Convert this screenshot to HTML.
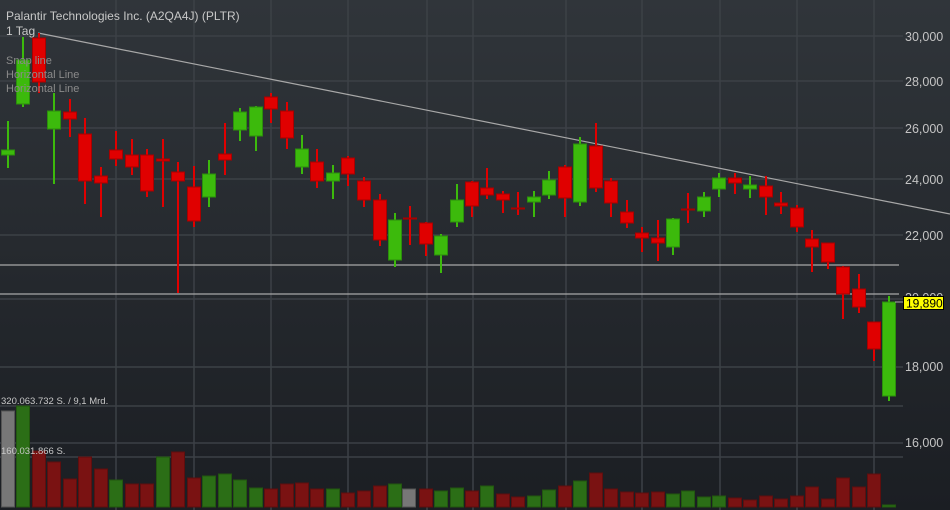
<!DOCTYPE html>
<html><head><meta charset="utf-8"><style>
html,body{margin:0;padding:0;width:950px;height:510px;overflow:hidden;background:#1c1f24}
svg{display:block}
text{font-family:"Liberation Sans",sans-serif}
.g line{stroke:#3cba0c;stroke-width:2}
.g rect{fill:#3cba0c;stroke:#2b8f0c;stroke-width:1}
.r line{stroke:#e00000;stroke-width:2}
.r rect{fill:#e00000;stroke:#a80000;stroke-width:1}
.vr rect{fill:#7a1212;stroke:#5e0e0e}
.vg rect{fill:#2b6e16;stroke:#22570f}
.vy rect{fill:#777;stroke:#555}
</style></head><body>
<svg width="950" height="510" xmlns="http://www.w3.org/2000/svg">
<defs><linearGradient id="bg" x1="0" y1="0" x2="0" y2="1"><stop offset="0" stop-color="#30353a"/><stop offset="1" stop-color="#1b1e23"/></linearGradient></defs>
<rect width="950" height="510" fill="url(#bg)"/>
<g stroke="#3c4146" stroke-width="1.5">
<line x1="0" y1="36" x2="903" y2="36"/><line x1="0" y1="81" x2="903" y2="81"/><line x1="0" y1="128" x2="903" y2="128"/><line x1="0" y1="179" x2="903" y2="179"/><line x1="0" y1="235" x2="903" y2="235"/><line x1="0" y1="299" x2="903" y2="299"/><line x1="0" y1="367" x2="903" y2="367"/><line x1="0" y1="406" x2="903" y2="406"/><line x1="0" y1="443" x2="903" y2="443"/><line x1="0" y1="457" x2="903" y2="457"/>
<line x1="116" y1="0" x2="116" y2="510"/><line x1="194" y1="0" x2="194" y2="510"/><line x1="271" y1="0" x2="271" y2="510"/><line x1="348" y1="0" x2="348" y2="510"/><line x1="427" y1="0" x2="427" y2="510"/><line x1="473" y1="0" x2="473" y2="510"/><line x1="566" y1="0" x2="566" y2="510"/><line x1="642" y1="0" x2="642" y2="510"/><line x1="720" y1="0" x2="720" y2="510"/><line x1="797" y1="0" x2="797" y2="510"/><line x1="874" y1="0" x2="874" y2="510"/>
</g>
<!-- volume -->
<g class="vy"><rect x="1.5" y="411" width="13" height="96"/><rect x="402.5" y="489" width="13" height="18"/></g>
<g class="vg">
<rect x="16.5" y="406" width="13" height="101"/><rect x="109.5" y="480" width="13" height="27"/><rect x="156.5" y="457" width="13" height="50"/><rect x="202.5" y="476" width="13" height="31"/><rect x="218.5" y="474" width="13" height="33"/><rect x="233.5" y="480" width="13" height="27"/><rect x="249.5" y="488" width="13" height="19"/><rect x="326.5" y="489" width="13" height="18"/><rect x="388.5" y="484" width="13" height="23"/><rect x="434.5" y="491" width="13" height="16"/><rect x="450.5" y="488" width="13" height="19"/><rect x="480.5" y="486" width="13" height="21"/><rect x="527.5" y="496" width="13" height="11"/><rect x="542.5" y="490" width="13" height="17"/><rect x="573.5" y="481" width="13" height="26"/><rect x="666.5" y="494" width="13" height="13"/><rect x="681.5" y="491" width="13" height="16"/><rect x="697.5" y="497" width="13" height="10"/><rect x="712.5" y="496" width="13" height="11"/><rect x="882.5" y="505" width="13" height="2"/>
</g>
<g class="vr">
<rect x="32.5" y="451" width="13" height="56"/><rect x="47.5" y="462" width="13" height="45"/><rect x="63.5" y="479" width="13" height="28"/><rect x="78.5" y="457" width="13" height="50"/><rect x="94.5" y="469" width="13" height="38"/><rect x="125.5" y="484" width="13" height="23"/><rect x="140.5" y="484" width="13" height="23"/><rect x="171.5" y="452" width="13" height="55"/><rect x="187.5" y="478" width="13" height="29"/><rect x="264.5" y="489" width="13" height="18"/><rect x="280.5" y="484" width="13" height="23"/><rect x="295.5" y="483" width="13" height="24"/><rect x="310.5" y="489" width="13" height="18"/><rect x="341.5" y="493" width="13" height="14"/><rect x="357.5" y="491" width="13" height="16"/><rect x="373.5" y="486" width="13" height="21"/><rect x="419.5" y="489" width="13" height="18"/><rect x="465.5" y="491" width="13" height="16"/><rect x="496.5" y="494" width="13" height="13"/><rect x="511.5" y="497" width="13" height="10"/><rect x="558.5" y="486" width="13" height="21"/><rect x="589.5" y="473" width="13" height="34"/><rect x="604.5" y="489" width="13" height="18"/><rect x="620.5" y="492" width="13" height="15"/><rect x="635.5" y="493" width="13" height="14"/><rect x="651.5" y="492" width="13" height="15"/><rect x="728.5" y="498" width="13" height="9"/><rect x="743.5" y="500" width="13" height="7"/><rect x="759.5" y="496" width="13" height="11"/><rect x="774.5" y="499" width="13" height="8"/><rect x="790.5" y="496" width="13" height="11"/><rect x="805.5" y="487" width="13" height="20"/><rect x="821.5" y="499" width="13" height="8"/><rect x="836.5" y="478" width="13" height="29"/><rect x="852.5" y="487" width="13" height="20"/><rect x="867.5" y="474" width="13" height="33"/>
</g>
<!-- drawn lines -->
<g stroke="#a8a8a8" stroke-width="1.2">
<line x1="0" y1="265" x2="899" y2="265"/><line x1="0" y1="294" x2="899" y2="294"/>
<line x1="38" y1="33" x2="950" y2="214"/>
</g>
<!-- candles green -->
<g class="g">
<line x1="8" y1="121" x2="8" y2="168"/><rect x="1.5" y="150" width="13" height="5"/>
<line x1="23" y1="37" x2="23" y2="107"/><rect x="16.5" y="60" width="13" height="44"/>
<line x1="54" y1="93" x2="54" y2="184"/><rect x="47.5" y="111" width="13" height="18"/>
<line x1="209" y1="160" x2="209" y2="207"/><rect x="202.5" y="174" width="13" height="23"/>
<line x1="240" y1="108" x2="240" y2="141"/><rect x="233.5" y="112" width="13" height="18"/>
<line x1="256" y1="106" x2="256" y2="151"/><rect x="249.5" y="107" width="13" height="29"/>
<line x1="302" y1="135" x2="302" y2="174"/><rect x="295.5" y="149" width="13" height="18"/>
<line x1="333" y1="165" x2="333" y2="199"/><rect x="326.5" y="173" width="13" height="8"/>
<line x1="395" y1="213" x2="395" y2="267"/><rect x="388.5" y="220" width="13" height="40"/>
<line x1="441" y1="234" x2="441" y2="273"/><rect x="434.5" y="236" width="13" height="19"/>
<line x1="457" y1="184" x2="457" y2="227"/><rect x="450.5" y="200" width="13" height="22"/>
<line x1="534" y1="191" x2="534" y2="217"/><rect x="527.5" y="197" width="13" height="5"/>
<line x1="549" y1="171" x2="549" y2="199"/><rect x="542.5" y="180" width="13" height="15"/>
<line x1="580" y1="137" x2="580" y2="206"/><rect x="573.5" y="144" width="13" height="58"/>
<line x1="673" y1="218" x2="673" y2="255"/><rect x="666.5" y="219" width="13" height="28"/>
<line x1="704" y1="192" x2="704" y2="217"/><rect x="697.5" y="197" width="13" height="14"/>
<line x1="719" y1="173" x2="719" y2="197"/><rect x="712.5" y="178" width="13" height="11"/>
<line x1="750" y1="176" x2="750" y2="198"/><rect x="743.5" y="185" width="13" height="4"/>
<line x1="889" y1="296" x2="889" y2="401"/><rect x="882.5" y="302" width="13" height="94"/>
</g>
<g class="r">
<line x1="39" y1="33" x2="39" y2="93"/><rect x="32.5" y="38" width="13" height="44"/>
<line x1="70" y1="99" x2="70" y2="137"/><rect x="63.5" y="112" width="13" height="7"/>
<line x1="85" y1="118" x2="85" y2="204"/><rect x="78.5" y="134" width="13" height="47"/>
<line x1="101" y1="167" x2="101" y2="217"/><rect x="94.5" y="176" width="13" height="7"/>
<line x1="116" y1="131" x2="116" y2="166"/><rect x="109.5" y="150" width="13" height="9"/>
<line x1="132" y1="139" x2="132" y2="175"/><rect x="125.5" y="155" width="13" height="12"/>
<line x1="147" y1="149" x2="147" y2="197"/><rect x="140.5" y="155" width="13" height="36"/>
<line x1="163" y1="139" x2="163" y2="207"/><rect x="156.5" y="159" width="13" height="2"/>
<line x1="178" y1="162" x2="178" y2="293"/><rect x="171.5" y="172" width="13" height="9"/>
<line x1="194" y1="166" x2="194" y2="227"/><rect x="187.5" y="187" width="13" height="34"/>
<line x1="225" y1="123" x2="225" y2="175"/><rect x="218.5" y="154" width="13" height="6"/>
<line x1="271" y1="93" x2="271" y2="123"/><rect x="264.5" y="97" width="13" height="12"/>
<line x1="287" y1="102" x2="287" y2="149"/><rect x="280.5" y="111" width="13" height="27"/>
<line x1="317" y1="149" x2="317" y2="188"/><rect x="310.5" y="162" width="13" height="19"/>
<line x1="348" y1="156" x2="348" y2="186"/><rect x="341.5" y="158" width="13" height="16"/>
<line x1="364" y1="177" x2="364" y2="207"/><rect x="357.5" y="181" width="13" height="19"/>
<line x1="380" y1="194" x2="380" y2="246"/><rect x="373.5" y="200" width="13" height="40"/>
<line x1="410" y1="206" x2="410" y2="245"/><rect x="403.5" y="218" width="13" height="1"/>
<line x1="426" y1="222" x2="426" y2="256"/><rect x="419.5" y="223" width="13" height="21"/>
<line x1="472" y1="181" x2="472" y2="217"/><rect x="465.5" y="182" width="13" height="24"/>
<line x1="487" y1="168" x2="487" y2="199"/><rect x="480.5" y="188" width="13" height="7"/>
<line x1="503" y1="191" x2="503" y2="213"/><rect x="496.5" y="194" width="13" height="6"/>
<line x1="518" y1="192" x2="518" y2="215"/><rect x="511.5" y="208" width="13" height="1"/>
<line x1="565" y1="165" x2="565" y2="217"/><rect x="558.5" y="167" width="13" height="31"/>
<line x1="596" y1="123" x2="596" y2="192"/><rect x="589.5" y="146" width="13" height="42"/>
<line x1="611" y1="178" x2="611" y2="217"/><rect x="604.5" y="181" width="13" height="22"/>
<line x1="627" y1="200" x2="627" y2="228"/><rect x="620.5" y="212" width="13" height="11"/>
<line x1="642" y1="227" x2="642" y2="252"/><rect x="635.5" y="233" width="13" height="5"/>
<line x1="658" y1="220" x2="658" y2="261"/><rect x="651.5" y="238" width="13" height="5"/>
<line x1="688" y1="193" x2="688" y2="223"/><rect x="681.5" y="209" width="13" height="1"/>
<line x1="735" y1="173" x2="735" y2="194"/><rect x="728.5" y="178" width="13" height="5"/>
<line x1="766" y1="176" x2="766" y2="215"/><rect x="759.5" y="186" width="13" height="11"/>
<line x1="781" y1="192" x2="781" y2="214"/><rect x="774.5" y="203" width="13" height="3"/>
<line x1="797" y1="205" x2="797" y2="232"/><rect x="790.5" y="208" width="13" height="19"/>
<line x1="812" y1="230" x2="812" y2="272"/><rect x="805.5" y="239" width="13" height="8"/>
<line x1="828" y1="243" x2="828" y2="269"/><rect x="821.5" y="243" width="13" height="19"/>
<line x1="843" y1="266" x2="843" y2="319"/><rect x="836.5" y="267" width="13" height="27"/>
<line x1="859" y1="274" x2="859" y2="313"/><rect x="852.5" y="289" width="13" height="18"/>
<line x1="874" y1="322" x2="874" y2="361"/><rect x="867.5" y="322" width="13" height="27"/>
</g>
<!-- axis labels -->
<g fill="#c4c4c4" font-size="12.5">
<text x="905" y="41">30,000</text><text x="905" y="86">28,000</text><text x="905" y="133">26,000</text><text x="905" y="184">24,000</text><text x="905" y="240">22,000</text><text x="905" y="302">20,000</text><text x="905" y="371">18,000</text><text x="905" y="447">16,000</text>
</g>
<line x1="895" y1="302" x2="903" y2="302" stroke="#aaa"/>
<rect x="903.5" y="296.5" width="40" height="13" fill="#ffff00" stroke="#000"/>
<text x="906" y="307.5" font-size="12" fill="#000">19,890</text>
<g fill="#c8c8c8" font-size="12"><text x="6" y="20">Palantir Technologies Inc. (A2QA4J) (PLTR)</text><text x="6" y="35">1 Tag</text></g>
<g fill="#8a8a8a" font-size="11"><text x="6" y="64">Snap line</text><text x="6" y="78">Horizontal Line</text><text x="6" y="92">Horizontal Line</text></g>
<g fill="#c8c8c8" font-size="9.5"><text x="1" y="404">320.063.732 S. / 9,1 Mrd.</text><text x="1" y="454">160.031.866 S.</text></g>
</svg>
</body></html>
